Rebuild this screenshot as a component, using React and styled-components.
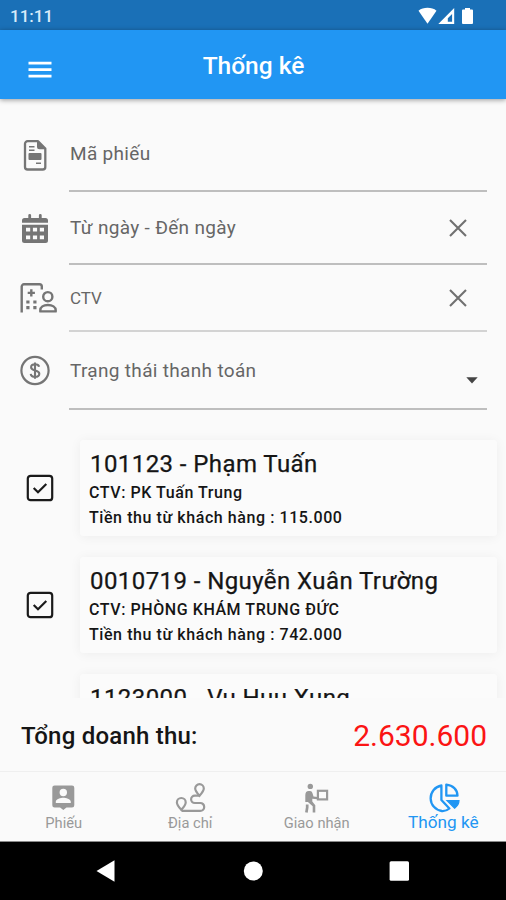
import React, { useState } from 'react';
import styled, { createGlobalStyle } from 'styled-components';

const initialOrders = [
  { id: 1, title: '101123 - Phạm Tuấn', ctv: 'PK Tuấn Trung', amount: '115.000', checked: true },
  { id: 2, title: '0010719 - Nguyễn Xuân Trường', ctv: 'PHÒNG KHÁM TRUNG ĐỨC', amount: '742.000', checked: true },
  { id: 3, title: '1123000 - Vu Huu Xung', checked: true },
];

const DocumentIcon = () => (
  <svg width="38" height="32" viewBox="0 0 38 32" fill="none">
    <path d="M7.600 2.200h10.500l7.200 7.400v18.300a2.600 2.600 0 0 1-2.600 2.600H7.600A2.600 2.600 0 0 1 5 27.900V4.800a2.600 2.600 0 0 1 2.600-2.600z" stroke="currentColor" strokeWidth="2.300" strokeLinejoin="round" />
    <path d="M17 2v5.800a2.500 2.500 0 0 0 2.500 2.500h6z" fill="currentColor" />
    <path d="M9 7.800h5.500M9 11.200h5.500M16 24.300h5" stroke="currentColor" strokeWidth="1.400" />
    <rect x="8.500" y="14" width="13" height="7" rx="1" fill="currentColor" />
  </svg>
);

const CalendarIcon = () => (
  <svg width="38" height="32" viewBox="0 0 38 32" fill="currentColor">
    <path d="M8.300 2.300a1.400 1.400 0 0 1 2.800 0v2.700h7.800V2.300a1.400 1.400 0 0 1 2.800 0v2.700h3.800A2.500 2.500 0 0 1 28 7.500v2.300H2V7.500a2.500 2.500 0 0 1 2.500-2.500h3.800z" />
    <path fillRule="evenodd" d="M2 11.800h26v15.700a2.500 2.500 0 0 1-2.500 2.500h-21A2.500 2.500 0 0 1 2 27.500zm4 3v3.700h4.200v-3.700zm6.900 0v3.700h4.200v-3.700zm6.900 0v3.700H24v-3.700zM6 22.500v3.700h4.200v-3.700zm6.900 0v3.700h4.200v-3.700zm6.900 0v3.700H24v-3.700z" />
  </svg>
);

const ClinicIcon = () => (
  <svg width="38" height="32" viewBox="0 0 38 32" fill="none" stroke="currentColor" strokeWidth="2.400">
    <path d="M1.700 29.500V3.600a2.300 2.300 0 0 1 2.300-2.300h15.500a2.300 2.300 0 0 1 2.300 2.300v3" />
    <path d="M11.300 6.300v7.200M7.700 9.900h7.200" />
    <path d="M6.300 19h3.200M13.300 19h3.200M6.300 24.700h3.200M13.300 24.700h3.200" strokeWidth="3.200" />
    <circle cx="27.800" cy="13.700" r="4.600" />
    <path d="M20.300 28.400v-1.200c0-3 3-5.200 7.600-5.200s7.800 2.200 7.800 5.200v1.200z" strokeLinejoin="round" />
  </svg>
);

const DollarIcon = () => (
  <svg width="38" height="32" viewBox="0 0 38 32" fill="none" stroke="currentColor">
    <circle cx="15" cy="15.500" r="13.600" strokeWidth="2.200" />
    <path d="M15 7.400v16.300M19.100 11.800c-.4-1.600-1.800-2.500-4-2.500-2.400 0-4 1.100-4 3 0 4.300 8.200 2.100 8.200 6.400 0 1.900-1.700 3.100-4.200 3.100-2.500 0-4.100-1.100-4.400-3" strokeWidth="2.100" />
  </svg>
);

const ClearIcon = () => (
  <svg width="18" height="18" viewBox="0 0 18 18">
    <path d="M1 1l16 16M17 1L1 17" stroke="currentColor" strokeWidth="2.100" />
  </svg>
);

const CaretIcon = () => (
  <svg width="12" height="7" viewBox="0 0 12 7">
    <path d="M.3.300h11.400L6 6.600z" fill="#444" />
  </svg>
);

const CheckboxIcon = ({ checked }) => (
  <svg width="28" height="28" viewBox="0 0 28 28" fill="none" stroke="#1a1a1a" strokeWidth="2.200">
    <rect x="1.800" y="1.800" width="24.400" height="24.400" rx="2.800" />
    {checked && <path d="M7.700 14l4.300 4.200 8.300-8.200" />}
  </svg>
);

const MenuIcon = () => (
  <svg width="24" height="18" viewBox="0 0 24 18">
    <path d="M.5 2.200h23M.5 8.700h23M.5 15.200h23" stroke="#fff" strokeWidth="2.700" />
  </svg>
);

const StatusIcons = () => (
  <svg width="58" height="18" viewBox="0 0 58 18" fill="#fff">
    <path d="M.5 3.700C3 1.700 6 .800 9.500.800s6.500.900 9 2.900L9.500 16.800z" />
    <path fillRule="evenodd" d="M20.300 17L36.200 1v16zM29.800 14.700h4.300V6.900l-4.300 4.400z" />
    <path d="M44 3.500q0-1 1-1h2V1h5v1.500h2q1 0 1 1V16q0 1-1 1h-9q-1 0-1-1z" />
  </svg>
);

const OrderTabIcon = () => (
  <svg width="32" height="32" viewBox="0 0 32 32" fill="currentColor">
    <path fillRule="evenodd" d="M7.600 3.500H25a2.300 2.300 0 0 1 2.300 2.300v17.400a2.300 2.300 0 0 1-2.300 2.300h-5.500L16.300 28l-3.200-2.500H7.600a2.300 2.300 0 0 1-2.300-2.300V5.800a2.300 2.300 0 0 1 2.300-2.300zM16.300 6.800a3.700 3.700 0 1 0 0 7.400 3.700 3.700 0 0 0 0-7.400zM8.800 21h15v-1.200c0-2.600-5-4-7.500-4s-7.500 1.400-7.500 4z" />
  </svg>
);

const RouteTabIcon = () => (
  <svg width="32" height="32" viewBox="0 0 32 32" fill="none" stroke="currentColor" strokeWidth="2.200">
    <path d="M25.500 13.800c-2.600-3-4.300-5.100-4.300-7.300a4.300 4.300 0 0 1 8.600 0c0 2.200-1.700 4.300-4.300 7.300z" />
    <path d="M7.300 27.800c-2.700-3-4.400-5.200-4.400-7.400a4.400 4.400 0 0 1 8.800 0c0 2.200-1.700 4.400-4.400 7.400z" />
    <path d="M25.500 13.600h-4.700a3.700 3.700 0 0 0 0 7.400h5.500a3.900 3.900 0 0 1 0 7.800H8.500l-1.200-1.300" />
  </svg>
);

const DeliveryTabIcon = () => (
  <svg width="32" height="32" viewBox="0 0 32 32" fill="none" stroke="currentColor">
    <circle cx="10.300" cy="4.400" r="2.700" fill="currentColor" stroke="none" />
    <path d="M5.300 13.200c0-2.800 1.200-4.300 3.400-4.300h1.200c2 0 2.500 1.500 3 3.600l.6 2 4 .6v2.200l-5.200-.6v2.800l3 3.800v7.200h-2.600v-6.200L7.900 20h-2.600z" fill="currentColor" stroke="none" />
    <path d="M7.200 22.500v3l-.8 5" strokeWidth="2.700" />
    <rect x="17.900" y="8.800" width="9.200" height="8.600" strokeWidth="2.200" />
  </svg>
);

const StatsTabIcon = () => (
  <svg width="34" height="32" viewBox="0 0 34 32" fill="none" stroke="currentColor" strokeWidth="2.300">
    <path d="M15.400 3.500A12.900 12.900 0 0 0 15.800 29c3 .2 5.600-.7 7.600-2.500L15.400 18z" strokeLinejoin="round" />
    <path d="M20.300 2.700v11h11.200c0-6.200-4.700-10.500-11.200-11z" strokeLinejoin="round" />
    <path d="M21 18.600h12c0 3-1.600 5.600-4.400 7.600z" fill="currentColor" strokeWidth="1.200" />
  </svg>
);

const tabs = [
  { id: 'phieu', label: 'Phiếu', Icon: OrderTabIcon },
  { id: 'diachi', label: 'Địa chỉ', Icon: RouteTabIcon },
  { id: 'giaonhan', label: 'Giao nhận', Icon: DeliveryTabIcon },
  { id: 'thongke', label: 'Thống kê', Icon: StatsTabIcon },
];

const App = () => {
  const [orders, setOrders] = useState(initialOrders);
  const [activeTab, setActiveTab] = useState('thongke');

  const toggleOrder = (id) => {
    setOrders(orders.map(o => (o.id === id ? { ...o, checked: !o.checked } : o)));
  };

  return (
    <Screen>
      <GlobalStyle />
      <StatusBar>
        <span>11:11</span>
        <StatusIcons />
      </StatusBar>
      <AppBar>
        <MenuButton aria-label="Menu"><MenuIcon /></MenuButton>
        <Title>Thống kê</Title>
      </AppBar>

      <Filters>
        <Field $height={75}>
          <DocumentIcon />
          <FieldBody><FieldLabel>Mã phiếu</FieldLabel></FieldBody>
        </Field>
        <Field $height={73}>
          <CalendarIcon />
          <FieldBody>
            <FieldLabel>Từ ngày - Đến ngày</FieldLabel>
            <ClearButton aria-label="Xóa"><ClearIcon /></ClearButton>
          </FieldBody>
        </Field>
        <Field $height={67} $light>
          <ClinicIcon />
          <FieldBody>
            <FieldLabel $size={17} $spacing={0}>CTV</FieldLabel>
            <ClearButton aria-label="Xóa"><ClearIcon /></ClearButton>
          </FieldBody>
        </Field>
        <Field $height={78}>
          <DollarIcon />
          <FieldBody>
            <FieldLabel>Trạng thái thanh toán</FieldLabel>
            <Caret><CaretIcon /></Caret>
          </FieldBody>
        </Field>
      </Filters>

      <OrderList>
        {orders.map(order => (
          <OrderRow key={order.id}>
            <CheckButton onClick={() => toggleOrder(order.id)} role="checkbox" aria-checked={order.checked}>
              <CheckboxIcon checked={order.checked} />
            </CheckButton>
            <Card>
              <CardTitle>{order.title}</CardTitle>
              {order.ctv && <CardText>CTV: {order.ctv}</CardText>}
              {order.amount && <CardText>Tiền thu từ khách hàng : {order.amount}</CardText>}
            </Card>
          </OrderRow>
        ))}
      </OrderList>

      <Total>
        <TotalLabel>Tổng doanh thu:</TotalLabel>
        <TotalValue>2.630.600</TotalValue>
      </Total>

      <TabBar>
        {tabs.map(({ id, label, Icon }) => (
          <Tab key={id} $active={id === activeTab} onClick={() => setActiveTab(id)}>
            <Icon />
            <span>{label}</span>
          </Tab>
        ))}
      </TabBar>

      <SystemNav>
        <svg width="20" height="24" viewBox="0 0 20 24"><path d="M.500 12L18.500 1.300v21.400z" fill="#fff" /></svg>
        <svg width="20" height="20" viewBox="0 0 20 20"><circle cx="10.300" cy="10" r="9.500" fill="#fff" /></svg>
        <svg width="20" height="20" viewBox="0 0 20 20"><rect x=".6" y=".3" width="19.400" height="19.400" rx="1.500" fill="#fff" /></svg>
      </SystemNav>
    </Screen>
  );
};

export default App;

const GlobalStyle = createGlobalStyle`
  * {
    box-sizing: border-box;
  }

  body {
    margin: 0;
    font-family: Roboto, sans-serif;
    background: #fafafa;
  }

  button {
    padding: 0;
    border: none;
    background: none;
    font-family: inherit;
    cursor: pointer;
  }

  svg {
    display: block;
    flex-shrink: 0;
  }
`;

const Screen = styled.div`
  display: flex;
  flex-direction: column;
  width: 506px;
  height: 900px;
  overflow: hidden;
  background: #fafafa;
`;

const StatusBar = styled.div`
  display: flex;
  align-items: center;
  justify-content: space-between;
  flex-shrink: 0;
  height: 30px;
  padding: 1px 30px 0 10px;
  background: #1a70b7;
  color: #d9ebfa;
  font-size: 17px;
  font-weight: 500;
`;

const AppBar = styled.header`
  display: grid;
  grid-template-columns: 80px 1fr 80px;
  align-items: center;
  flex-shrink: 0;
  height: 69px;
  background: #2196f3;
  box-shadow: 0 1px 5px rgba(0, 0, 0, 0.4);
`;

const MenuButton = styled.button`
  padding: 10px 0 0 28px;
`;

const Title = styled.h1`
  margin: 0;
  padding: 1px 0 0 1px;
  text-align: center;
  color: #fff;
  font-size: 24.5px;
  font-weight: 500;
`;

const Filters = styled.div`
  flex-shrink: 0;
  padding: 18px 19px 0 20px;
`;

const Field = styled.div`
  display: flex;
  align-items: center;
  height: ${props => props.$height}px;
  color: #757575;

  > div {
    border-bottom: 2px solid ${props => (props.$light ? '#d3d3d3' : '#bebebe')};
  }
`;

const FieldBody = styled.div`
  display: flex;
  align-items: center;
  flex: 1;
  height: 100%;
  margin-left: 11px;
`;

const FieldLabel = styled.span`
  flex: 1;
  padding-left: 1px;
  font-size: ${props => props.$size || 19}px;
  letter-spacing: ${props => props.$spacing ?? 0.32}px;
  color: #666;
`;

const ClearButton = styled.button`
  margin-right: 20px;
  color: #707070;
`;

const Caret = styled.span`
  margin: 20px 9px 0 0;
`;

const OrderList = styled.div`
  display: flex;
  flex-direction: column;
  flex: 1;
  gap: 21px;
  min-height: 0;
  margin-top: 9px;
  padding: 21px 9px 0 26px;
  overflow: hidden;
`;

const OrderRow = styled.div`
  display: flex;
  align-items: center;
  flex-shrink: 0;
`;

const CheckButton = styled.button`
  width: 54px;
`;

const Card = styled.div`
  flex: 1;
  height: 96px;
  padding: 8px 9px;
  border-radius: 3px;
  background: #fbfbfb;
  box-shadow: 0 1px 12px rgba(0, 0, 0, 0.055);
  color: #151515;
`;

const CardTitle = styled.div`
  padding-left: 1px;
  font-size: 24px;
  line-height: 32px;
  letter-spacing: 0.42px;
  white-space: nowrap;
  -webkit-text-stroke: 0.25px;
`;

const CardText = styled.div`
  font-size: 16px;
  font-weight: 500;
  line-height: 25px;
  letter-spacing: 0.57px;
  white-space: nowrap;
`;

const Total = styled.div`
  display: flex;
  align-items: center;
  justify-content: space-between;
  flex-shrink: 0;
  height: 73px;
  padding: 2px 19px 0 21px;
`;

const TotalLabel = styled.span`
  color: #151515;
  font-size: 24px;
  font-weight: 500;
  letter-spacing: 0.22px;
`;

const TotalValue = styled.span`
  color: #fb1414;
  font-size: 30px;
`;

const TabBar = styled.nav`
  display: grid;
  grid-template-columns: repeat(4, 1fr);
  flex-shrink: 0;
  height: 71px;
  border-top: 1px solid #efefef;
  border-bottom: 1px solid #8a8a8a;
`;

const Tab = styled.button`
  display: flex;
  flex-direction: column;
  align-items: center;
  padding-top: 10px;
  color: ${props => (props.$active ? '#2196f3' : '#999')};

  span {
    padding-left: 1px;
    font-size: ${props => (props.$active ? 17.2 : 14.7)}px;
    line-height: ${props => (props.$active ? 17 : 18)}px;
  }
`;

const SystemNav = styled.div`
  display: flex;
  align-items: center;
  justify-content: space-between;
  flex-shrink: 0;
  height: 58px;
  padding: 0 97px 0 96px;
  background: #000;
`;
